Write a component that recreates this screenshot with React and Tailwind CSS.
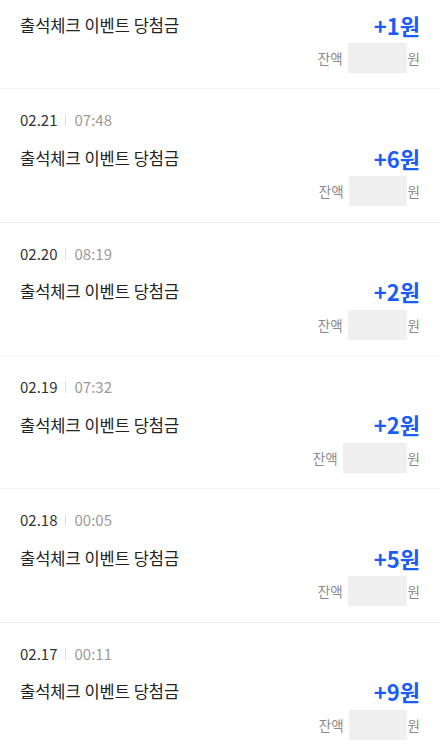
const items = [
  { date: null, time: null, amount: 1, boxW: 59 },
  { date: "02.21", time: "07:48", amount: 6, boxW: 58 },
  { date: "02.20", time: "08:19", amount: 2, boxW: 59 },
  { date: "02.19", time: "07:32", amount: 2, boxW: 64 },
  { date: "02.18", time: "00:05", amount: 5, boxW: 59 },
  { date: "02.17", time: "00:11", amount: 9, boxW: 58 },
];

const Row = ({ date, time, amount, boxW }) => {
  return (
    <div className="border-b border-[#f2f2f2] px-5">
      {date ? (
        <div className="flex h-[20px] items-center pt-[21px] box-content text-[15px] leading-[20px]">
          <span className="text-[#333333]">{date}</span>
          <span className="mx-[8px] h-[12px] w-px bg-[#dddddd]" />
          <span className="text-[#9a9a9a]">{time}</span>
        </div>
      ) : null}
      <div
        className={
          date
            ? "mt-[16px] flex h-[24px] items-center justify-between"
            : "mt-[13px] flex h-[24px] items-center justify-between"
        }
      >
        <span className="text-[16.5px] text-[#222222]">출석체크 이벤트 당첨금</span>
        <span className="text-[22px] font-bold text-[#1b5cf7]">
          +{amount}원
        </span>
      </div>
      <div className="mt-[6px] flex h-[30px] items-center justify-end pb-[15.33px] box-content text-[13.5px] text-[#8a8a8a]">
        <span>잔액</span>
        <span
          className="ml-[5px] mr-[1px] h-[30px] bg-[#efefef]"
          style={{ width: boxW }}
        />
        <span>원</span>
      </div>
    </div>
  );
};

export default function App() {
  return (
    <div
      className="min-h-screen bg-white"
      style={{ fontFamily: '"Noto Sans CJK KR", "Noto Sans", sans-serif' }}
    >
      {items.map((it, i) => (
        <Row key={i} {...it} />
      ))}
    </div>
  );
}
